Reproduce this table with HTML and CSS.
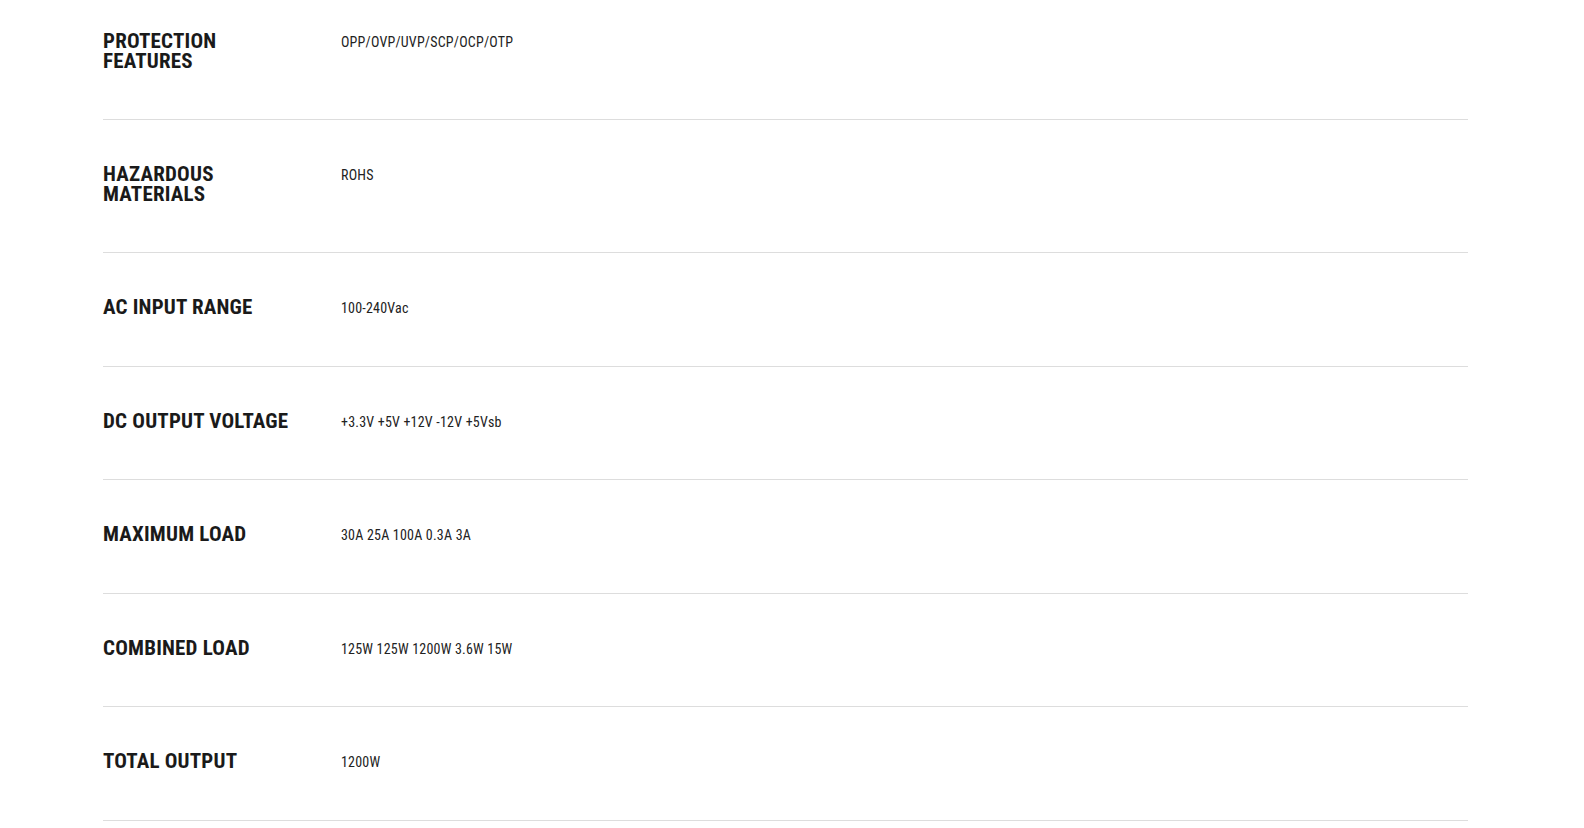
FILE: index.html
```html
<!DOCTYPE html>
<html lang="en">
<head>
<meta charset="utf-8">
<title>Specifications</title>
<link rel="stylesheet" href="styles.css">
</head>
<body>
<section class="specs">
  <div class="spec-row first">
    <h3 class="spec-label">PROTECTION<br>FEATURES</h3>
    <div class="spec-value">OPP/OVP/UVP/SCP/OCP/OTP</div>
  </div>
  <div class="spec-row">
    <h3 class="spec-label">HAZARDOUS<br>MATERIALS</h3>
    <div class="spec-value">ROHS</div>
  </div>
  <div class="spec-row">
    <h3 class="spec-label">AC INPUT RANGE</h3>
    <div class="spec-value">100-240Vac</div>
  </div>
  <div class="spec-row">
    <h3 class="spec-label">DC OUTPUT VOLTAGE</h3>
    <div class="spec-value">+3.3V +5V +12V -12V +5Vsb</div>
  </div>
  <div class="spec-row">
    <h3 class="spec-label">MAXIMUM LOAD</h3>
    <div class="spec-value">30A 25A 100A 0.3A 3A</div>
  </div>
  <div class="spec-row">
    <h3 class="spec-label">COMBINED LOAD</h3>
    <div class="spec-value">125W 125W 1200W 3.6W 15W</div>
  </div>
  <div class="spec-row">
    <h3 class="spec-label">TOTAL OUTPUT</h3>
    <div class="spec-value">1200W</div>
  </div>
</section>
</body>
</html>
```
FILE: styles.css
```css
html, body {
  margin: 0;
  padding: 0;
  background: #ffffff;
}

body {
  font-family: "Roboto Condensed", "Roboto", "Liberation Sans", sans-serif;
  color: #1c1c1c;
}

.specs {
  margin: 0 116px 0 103px;
  display: flex;
  flex-direction: column;
}

.spec-row {
  display: flex;
  align-items: flex-start;
  padding: 44px 0 48.5px;
  border-bottom: 1px solid #dddddd;
}

.spec-row.first {
  padding-top: 31px;
  padding-bottom: 47.5px;
}

.spec-label {
  margin: 0;
  width: 238px;
  flex: 0 0 238px;
  font-size: 21px;
  font-weight: 700;
  line-height: 20px;
  letter-spacing: 0.2px;
  color: #1a1a1a;
}

.spec-value {
  padding-top: 3px;
  font-size: 14px;
  line-height: 17px;
  letter-spacing: 0.2px;
  color: #222222;
}
```
